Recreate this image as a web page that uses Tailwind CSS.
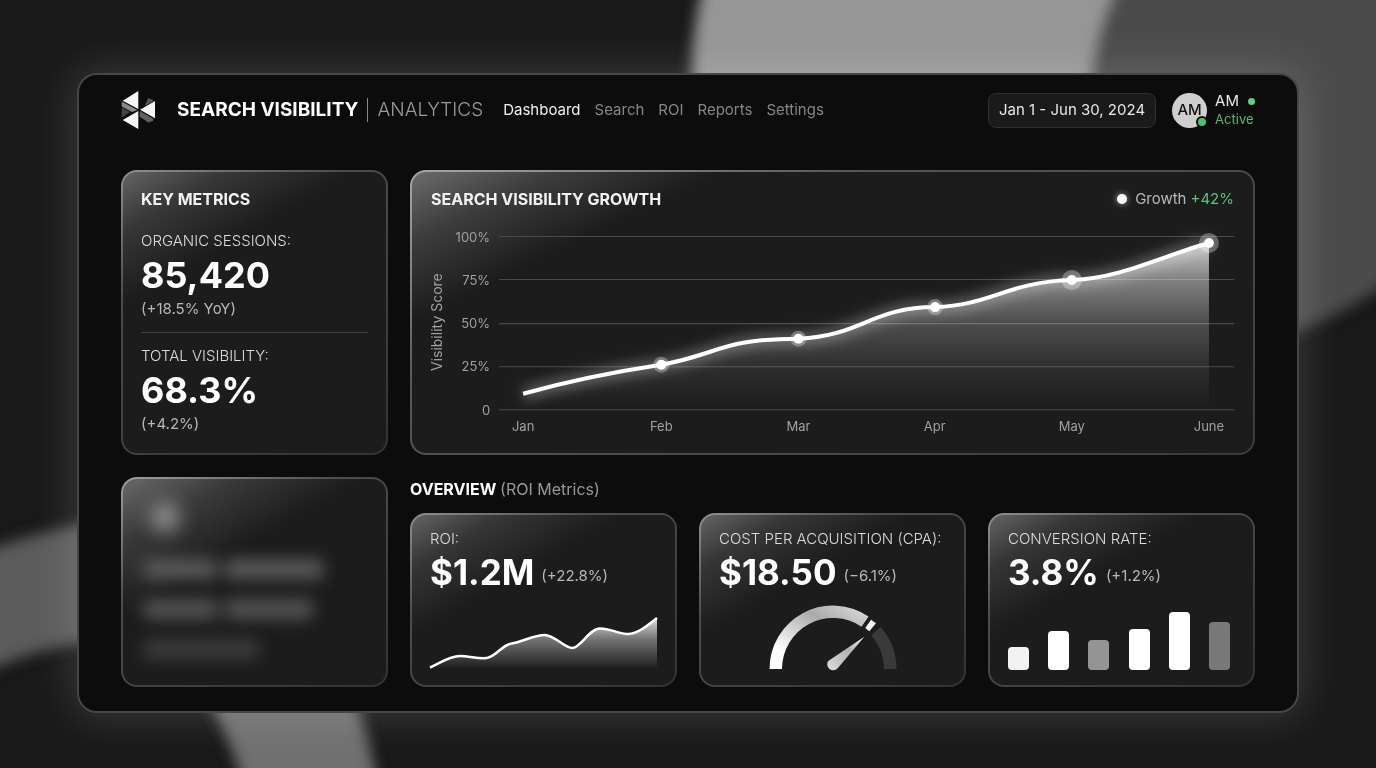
<!DOCTYPE html>
<html lang="en">
<head>
    <meta charset="UTF-8">
    <meta name="viewport" content="width=device-width, initial-scale=1.0">
    <title>Search Visibility | Analytics</title>
    <script src="https://cdn.jsdelivr.net/npm/@tailwindcss/browser@4"></script>
</head>
<body class="min-h-screen overflow-x-hidden bg-[#191919] px-[77px] pt-[73px] pb-[56px] font-['Inter',sans-serif] text-white">

    <!-- Backdrop -->
    <svg class="fixed inset-0 -z-10 h-full w-full" viewBox="0 0 1376 768" preserveAspectRatio="none" aria-hidden="true">
        <defs>
            <filter id="soft" x="-20%" y="-20%" width="140%" height="140%"><feGaussianBlur stdDeviation="7" /></filter>
        </defs>
        <g filter="url(#soft)">
            <path d="M1080 -40H1440V230Q1400 290 1290 335H1080Z" fill="#4c4c4c" />
            <path d="M712 -40Q688 20 692 110H1088Q1090 30 1130 -40Z" fill="#969696" />
            <path d="M-40 562Q20 535 100 520V640Q20 650 -40 685Z" fill="#5c5c5c" />
            <path d="M190 670Q235 740 246 800H380Q372 740 345 670Z" fill="#707070" />
        </g>
    </svg>

    <!-- Panel -->
    <div class="rounded-[20px] border-2 border-[#464646] bg-[#0c0c0c] px-[42px] pt-[17px] pb-6 shadow-[0_0_44px_4px_rgba(255,255,255,0.15)]">

        <!-- Header -->
        <header class="flex h-9 items-center">
            <svg class="h-[38px] w-9 shrink-0" viewBox="0 0 36 38" aria-hidden="true">
                <path d="M.7 10.500 16.500 19 11 21 .7 15.500Z" fill="#8a8a8a" />
                <path d="M.7 16.500 9 21 .7 26.700Z" fill="#444" />
                <path d="M27.3 7 32.500 9.300 31 11 23.500 15Z" fill="#555" />
                <path d="M19 20 32.300 27.700V29.700L27.3 31.500 18.500 25.500Z" fill="#606060" />
                <path d="M17.300 0V18L1.700 9.700ZM17.300 20V38L1.700 29ZM19 18.700 34 10V27.300Z" fill="#f5f5f5" />
            </svg>
            <h1 class="ml-5 flex items-center text-[19px] whitespace-nowrap">
                <span class="font-bold">SEARCH VISIBILITY</span>
                <span class="mx-[9px] h-6 w-px bg-[#8a8a8a]"></span>
                <span class="font-light text-[#9a9a9a]">ANALYTICS</span>
            </h1>
            <nav class="ml-5 flex gap-[14px] text-[15px] text-[#858585]">
                <a href="#" class="text-[#f0f0f0]">Dashboard</a>
                <a href="#">Search</a>
                <a href="#">ROI</a>
                <a href="#">Reports</a>
                <a href="#">Settings</a>
            </nav>
            <button type="button" class="ml-auto h-[35px] rounded-lg border border-[#303030] bg-[#1a1a1a] px-[10px] text-[15px] whitespace-nowrap text-[#e8e8e8]">Jan 1 - Jun 30, 2024</button>
            <div class="ml-4 flex items-center gap-2">
                <div class="relative flex size-[35px] items-center justify-center rounded-full bg-[#cfcfcf] text-[15px] font-medium text-[#111]">
                    AM
                    <span class="absolute right-0 bottom-0 size-3 translate-x-px rounded-full border-2 border-[#0c0c0c] bg-[#4fc06f]"></span>
                </div>
                <div class="leading-[18px]">
                    <div class="flex items-center gap-[9px] text-[15px] text-[#e8e8e8]">AM <span class="size-[7px] rounded-full bg-[#5fd07f]"></span></div>
                    <div class="text-[13px] text-[#56b873]">Active</div>
                </div>
            </div>
        </header>

        <main class="mt-[42px] grid grid-cols-4 gap-[22px]">

            <!-- Key metrics -->
            <section class="rounded-2xl border-2 border-transparent px-[18px] pt-[17px] pb-[19px] [background:linear-gradient(150deg,#646464_0,#383838_50px,#1c1c1c_115px)_padding-box,linear-gradient(150deg,#909090_0,#4c4c4c_110px,#333_100%)_border-box]">
                <h2 class="text-base leading-5 font-bold text-[#f2f2f2]">KEY METRICS</h2>
                <p class="mt-[22px] text-[15px] leading-5 font-light text-[#dcdcdc]">ORGANIC SESSIONS:</p>
                <p class="text-4xl leading-[48px] font-bold">85,420</p>
                <p class="text-[15px] leading-5 text-[#b8b8b8]">(+18.5% YoY)</p>
                <hr class="mt-[13px] border-[#3f3f3f]">
                <p class="mt-[13px] text-[15px] leading-5 font-light text-[#dcdcdc]">TOTAL VISIBILITY:</p>
                <p class="text-4xl leading-[48px] font-bold">68.3%</p>
                <p class="text-[15px] leading-5 text-[#b8b8b8]">(+4.2%)</p>
            </section>

            <!-- Growth chart -->
            <section class="col-span-3 rounded-2xl border-2 border-transparent px-[19px] pt-[17px] [background:linear-gradient(154deg,#6c6c6c_0,#3e3e3e_60px,#1c1c1c_135px)_padding-box,linear-gradient(154deg,#a8a8a8_0,#555_200px,#3c3c3c_100%)_border-box]">
                <div class="flex items-center">
                    <h2 class="text-base leading-5 font-bold text-[#f2f2f2]">SEARCH VISIBILITY GROWTH</h2>
                    <p class="ml-auto flex items-center text-[15px] leading-5 text-[#b8b8b8]">
                        <span class="mr-2 size-[10px] rounded-full bg-white shadow-[0_0_6px_rgba(255,255,255,0.6)]"></span>
                        Growth <span class="ml-1 text-[#5cc47c]">+42%</span>
                    </p>
                </div>
                <svg class="mt-[11px] w-full overflow-visible" viewBox="0 0 802 220" role="img" aria-label="Visibility score from January to June">
                    <defs>
                        <linearGradient id="area" gradientUnits="userSpaceOnUse" x1="0" y1="23" x2="0" y2="189">
                            <stop offset="0" stop-color="#fff" stop-opacity=".75" />
                            <stop offset=".22" stop-color="#fff" stop-opacity=".45" />
                            <stop offset=".48" stop-color="#fff" stop-opacity=".22" />
                            <stop offset=".75" stop-color="#fff" stop-opacity=".08" />
                            <stop offset="1" stop-color="#fff" stop-opacity="0" />
                        </linearGradient>
                        <filter id="glow" filterUnits="userSpaceOnUse" x="60" y="-20" width="760" height="230"><feGaussianBlur stdDeviation="7" /></filter>
                    </defs>
                    <path d="M68 16.500H802M68 59.500H802M68 103.500H802M68 146.500H802M68 189.500H802" stroke="#4a4a4a" />
                    <path d="M92 173.500C140 160 180 152 230 144.500C285 135 290 118.500 367 118.500C430 116 440 87 503.500 87C560 85 575 62 640 60C690 58 730 36 777 23V189H92Z" fill="url(#area)" />
                    <path d="M92 173.500C140 160 180 152 230 144.500C285 135 290 118.500 367 118.500C430 116 440 87 503.500 87C560 85 575 62 640 60C690 58 730 36 777 23" fill="none" stroke="#fff" stroke-opacity=".45" stroke-width="8" filter="url(#glow)" />
                    <path d="M92 173.500C140 160 180 152 230 144.500C285 135 290 118.500 367 118.500C430 116 440 87 503.500 87C560 85 575 62 640 60C690 58 730 36 777 23" fill="none" stroke="#fff" stroke-width="4" />
                    <g fill="#fff" fill-opacity=".3">
                        <circle cx="230" cy="144.500" r="8" />
                        <circle cx="367" cy="118.500" r="8" />
                        <circle cx="503.500" cy="87" r="8" />
                        <circle cx="640" cy="60" r="10" />
                        <circle cx="777" cy="23" r="10" />
                    </g>
                    <g fill="#fff">
                        <circle cx="230" cy="144.500" r="5" />
                        <circle cx="367" cy="118.500" r="5" />
                        <circle cx="503.500" cy="87" r="5" />
                        <circle cx="640" cy="60" r="5" />
                        <circle cx="777" cy="23" r="5" />
                    </g>
                    <g fill="#a0a0a0" font-size="13" text-anchor="end">
                        <text x="59" y="22">100%</text>
                        <text x="59" y="65">75%</text>
                        <text x="59" y="108">50%</text>
                        <text x="59" y="151">25%</text>
                        <text x="59" y="195">0</text>
                    </g>
                    <g fill="#a0a0a0" font-size="13" text-anchor="middle">
                        <text x="92" y="211">Jan</text>
                        <text x="230" y="211">Feb</text>
                        <text x="367" y="211">Mar</text>
                        <text x="503" y="211">Apr</text>
                        <text x="640" y="211">May</text>
                        <text x="777" y="211">June</text>
                        <text font-size="14" transform="translate(11 102) rotate(-90)">Visibility Score</text>
                    </g>
                </svg>
            </section>

            <!-- Locked card -->
            <section class="overflow-hidden rounded-2xl border-2 border-transparent px-5 pt-6 [background:linear-gradient(150deg,#6a6a6a_0,#3a3a3a_55px,#1c1c1c_120px)_padding-box,linear-gradient(150deg,#a0a0a0_0,#4c4c4c_110px,#333_100%)_border-box]" aria-hidden="true">
                <div class="ml-2 size-7 rounded-full bg-[#9a9a9a] blur-[10px]"></div>
                <div class="mt-7 flex gap-2 blur-[8px]">
                    <div class="h-5 w-[74px] rounded bg-[#5a5a5a]"></div>
                    <div class="h-5 w-[98px] rounded bg-[#5a5a5a]"></div>
                </div>
                <div class="mt-5 flex gap-2 blur-[8px]">
                    <div class="h-5 w-[74px] rounded bg-[#535353]"></div>
                    <div class="h-5 w-[88px] rounded bg-[#535353]"></div>
                </div>
                <div class="mt-5 h-5 w-[116px] rounded bg-[#3c3c3c] blur-[8px]"></div>
            </section>

            <!-- Overview -->
            <section class="col-span-3">
                <h2 class="pb-3 text-base leading-6 font-bold">OVERVIEW <span class="font-normal text-[#989898]">(ROI Metrics)</span></h2>
                <div class="grid grid-cols-3 gap-[22px]">
                    <div class="rounded-2xl border-2 border-transparent px-[18px] pt-[14px] pb-[15px] [background:linear-gradient(150deg,#646464_0,#363636_45px,#1c1c1c_105px)_padding-box,linear-gradient(150deg,#909090_0,#4c4c4c_90px,#333_100%)_border-box]">
                        <h3 class="text-[15px] leading-5 font-light text-[#dcdcdc]">ROI:</h3>
                        <p class="flex items-center gap-[7px] text-[35px] leading-[46px] font-bold whitespace-nowrap">$1.2M <span class="pt-2 text-[15px] leading-5 font-normal text-[#b8b8b8]">(+22.8%)</span></p>
                        <svg class="mt-[7px] h-[68px] w-full overflow-visible" viewBox="0 0 228 68" preserveAspectRatio="none" role="img" aria-label="ROI trend">
                            <defs>
                                <linearGradient id="spark" x1="0" y1="0" x2="0" y2="1">
                                    <stop offset="0" stop-color="#fff" stop-opacity=".85" />
                                    <stop offset=".4" stop-color="#fff" stop-opacity=".4" />
                                    <stop offset="1" stop-color="#fff" stop-opacity="0" />
                                </linearGradient>
                            </defs>
                            <path d="M0 65.500C12 60 20 54 30 54S48 57 57 56S72 43 82 41.500S105 33 115 33S135 46 143 46S160 27 170 26.500S190 32 199 32S218 24 228 16V67H0Z" fill="url(#spark)" />
                            <path d="M0 65.500C12 60 20 54 30 54S48 57 57 56S72 43 82 41.500S105 33 115 33S135 46 143 46S160 27 170 26.500S190 32 199 32S218 24 228 16" fill="none" stroke="#fff" stroke-width="2.500" />
                        </svg>
                    </div>

                    <div class="rounded-2xl border-2 border-transparent px-[18px] pt-[14px] pb-[15px] [background:linear-gradient(150deg,#646464_0,#363636_45px,#1c1c1c_105px)_padding-box,linear-gradient(150deg,#909090_0,#4c4c4c_90px,#333_100%)_border-box]">
                        <h3 class="text-[15px] leading-5 font-light whitespace-nowrap text-[#dcdcdc]">COST PER ACQUISITION (CPA):</h3>
                        <p class="flex items-center gap-[7px] text-[35px] leading-[46px] font-bold whitespace-nowrap">$18.50 <span class="pt-2 text-[15px] leading-5 font-normal text-[#b8b8b8]">(−6.1%)</span></p>
                        <svg class="mx-auto mt-[7px] h-[68px] w-[130px] overflow-visible" viewBox="-65 -67 130 68" role="img" aria-label="CPA gauge">
                            <defs>
                                <linearGradient id="arc" x1="0" y1="1" x2="1" y2="0">
                                    <stop offset=".2" stop-color="#fff" />
                                    <stop offset=".65" stop-color="#aaa" />
                                    <stop offset="1" stop-color="#e0e0e0" />
                                </linearGradient>
                                <linearGradient id="needle" x1="0" y1="1" x2="1" y2="0">
                                    <stop offset="0" stop-color="#ddd" />
                                    <stop offset=".6" stop-color="#b0b0b0" />
                                    <stop offset="1" stop-color="#fff" />
                                </linearGradient>
                            </defs>
                            <path d="M-63.500 0A63.500 63.500 0 0 1 35.500-52.600L28.500-42.300A51 51 0 0 0-51 0Z" fill="url(#arc)" />
                            <path d="M38-49.300 43-45.700 36.300-37.700 32.300-41Z" fill="#f5f5f5" />
                            <path d="M47.500-42.100A63.500 63.500 0 0 1 63.500 0H51A51 51 0 0 0 38.200-33.800Z" fill="#3a3a3a" />
                            <path d="M31.300-32.300 4.500-.5A6 6 0 0 1-4.800-8Z" fill="url(#needle)" />
                        </svg>
                    </div>

                    <div class="rounded-2xl border-2 border-transparent px-[18px] pt-[14px] pb-[15px] [background:linear-gradient(150deg,#646464_0,#363636_45px,#1c1c1c_105px)_padding-box,linear-gradient(150deg,#909090_0,#4c4c4c_90px,#333_100%)_border-box]">
                        <h3 class="text-[15px] leading-5 font-light text-[#dcdcdc]">CONVERSION RATE:</h3>
                        <p class="flex items-center gap-[7px] text-[35px] leading-[46px] font-bold whitespace-nowrap">3.8% <span class="pt-2 text-[15px] leading-5 font-normal text-[#b8b8b8]">(+1.2%)</span></p>
                        <div class="mt-[7px] mr-[5px] flex h-[68px] items-end justify-between">
                            <div class="w-[21px] rounded bg-[#f2f2f2]" style="height: 34%"></div>
                            <div class="w-[21px] rounded bg-white" style="height: 57%"></div>
                            <div class="w-[21px] rounded bg-[#949494]" style="height: 44%"></div>
                            <div class="w-[21px] rounded bg-white" style="height: 61%"></div>
                            <div class="w-[21px] rounded bg-white" style="height: 86%"></div>
                            <div class="w-[21px] rounded bg-[#787878]" style="height: 70%"></div>
                        </div>
                    </div>
                </div>
            </section>
        </main>
    </div>

</body>
</html>
